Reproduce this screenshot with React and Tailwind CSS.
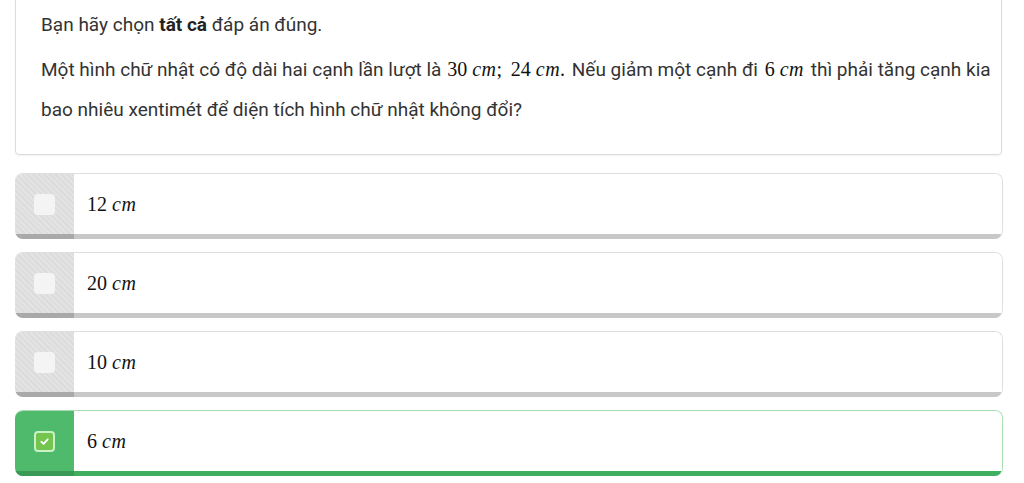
import React from "react";

const SERIF = "font-['Liberation_Serif','DejaVu_Serif',serif]";

const Cm = ({ n, size = "text-[20px]" }) => (
  <span className="whitespace-nowrap text-[#111]">
    <span className={SERIF + " " + size}>{n}</span>
    <span className={SERIF + " italic ml-[5px] tracking-[0.5px] " + size}>cm</span>
  </span>
);

function Option({ n, checked }) {
  return (
    <div
      className={
        "flex h-[66px] rounded-[8px] overflow-hidden border-t border-r " +
        (checked ? "border-[#a9dcb3]" : "border-[#dedede]")
      }
    >
      <div
        className={
          "w-[59px] shrink-0 flex items-center justify-center border-b-[5px] " +
          (checked
            ? "bg-[#4fb96c] border-[#3a9a55]"
            : "bg-[repeating-linear-gradient(45deg,#e3e3e3_0px,#e3e3e3_2px,#dcdcdc_2px,#dcdcdc_4px)] border-[#a9a9a9]")
        }
      >
        {checked ? (
          <div className="w-[21px] h-[21px] rounded-[4px] border-2 border-[#c8f1c6] bg-[#73c550] flex items-center justify-center">
            <svg width="11" height="11" viewBox="0 0 12 12">
              <path d="M2.5 6.3 L5 8.6 L9.5 3.6" fill="none" stroke="white" strokeWidth="2" strokeLinecap="round" strokeLinejoin="round" />
            </svg>
          </div>
        ) : (
          <div className="w-[21px] h-[21px] rounded-[4px] bg-[#f4f4f4]" />
        )}
      </div>
      <div
        className={
          "flex-1 bg-white flex items-center pl-[13px] border-b-[5px] " +
          (checked ? "border-[#3fae5f]" : "border-[#c8c8c8]")
        }
      >
        <Cm n={n} />
      </div>
    </div>
  );
}

export default function App() {
  return (
    <div className="w-[1024px] h-[483px] bg-white overflow-hidden font-['Roboto','Liberation_Sans',sans-serif]">
      <div className="px-[15px]">
        <div className="mt-[-10px] mr-[7px] border border-[#dcdcdc] rounded-[4px] pt-[14px] pl-[25px] pr-[4px] pb-[24px] text-[19px] text-[#333] shadow-[0_1px_2px_rgba(0,0,0,0.06)]">
          <p className="leading-[40px]">
            Bạn hãy chọn <b className="font-bold text-[#222]">tất cả</b> đáp án đúng.
          </p>
          <p className="leading-[40px] mt-[4px] whitespace-nowrap">
            Một hình chữ nhật có độ dài hai cạnh lần lượt là <span className="ml-[1px]" /><Cm n="30" />
            <span className={SERIF + " text-[20px] text-[#111] mr-[4px]"}>;</span> <Cm n="24" />
            <span className={SERIF + " text-[20px] text-[#111] mr-[2px]"}>.</span> Nếu giảm một cạnh đi <span className="ml-[2px]" /><Cm n="6" /><span className="mr-[2px]" /> thì phải tăng cạnh kia
            <br />
            bao nhiêu xentimét để diện tích hình chữ nhật không đổi?
          </p>
        </div>
        <div className="mt-[18px] mr-[6px] flex flex-col gap-[13px]">
          <Option n="12" />
          <Option n="20" />
          <Option n="10" />
          <Option n="6" checked />
        </div>
      </div>
    </div>
  );
}
